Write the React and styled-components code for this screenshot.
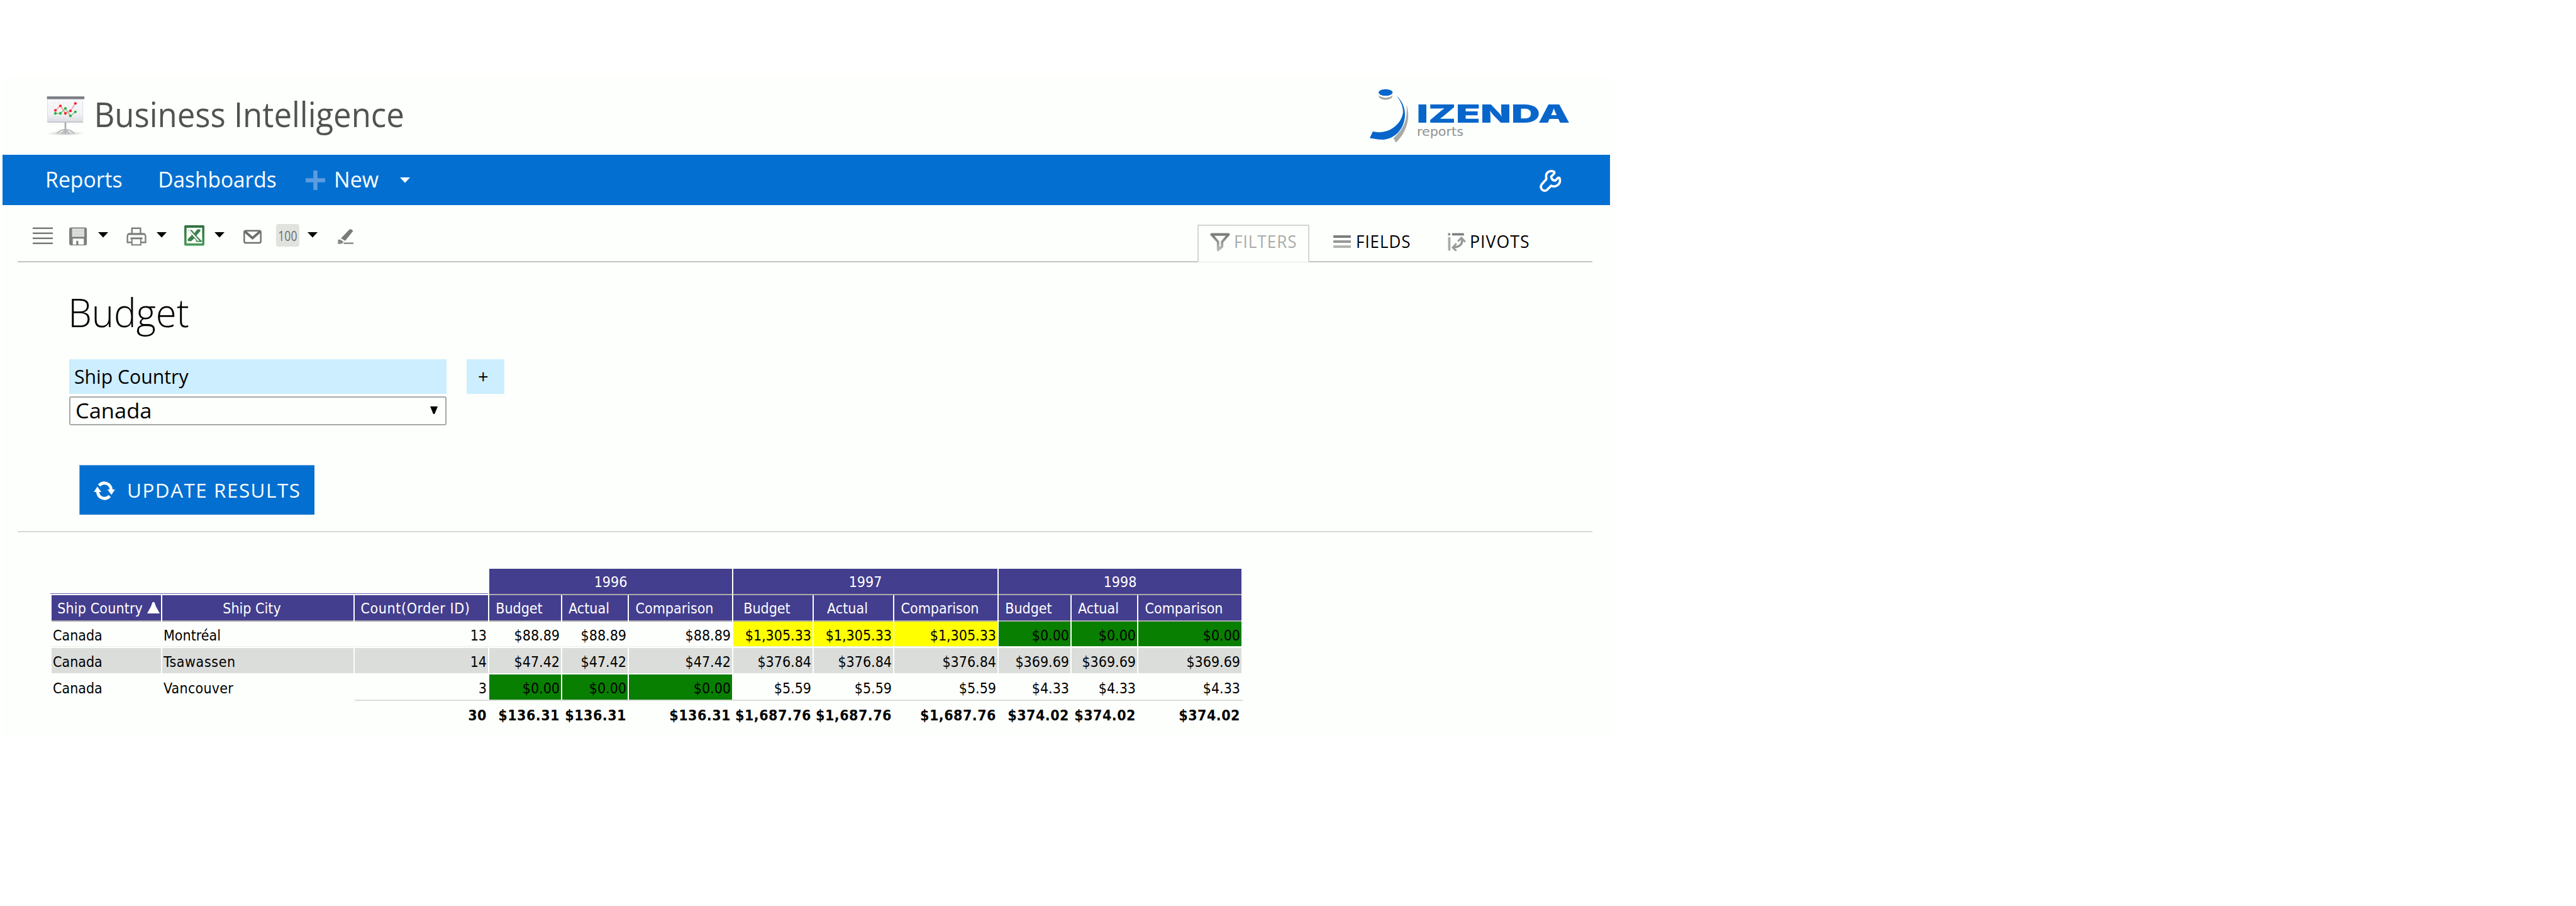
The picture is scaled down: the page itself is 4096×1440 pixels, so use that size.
import React, { useLayoutEffect, useState } from "react";
import styled, { createGlobalStyle, css } from "styled-components";

const SANS = '"Open Sans", "Noto Sans", sans-serif';
const BG = "#fdfffc";
const BLUE = "#0370d1";
const PURPLE = "#443e8e";

const GlobalStyle = createGlobalStyle`
  * { box-sizing: border-box; }
  body { margin: 0; background: #fff; font-family: ${SANS}; color: #000; }
`;

/* ---------- text that keeps a set ink width ---------- */

const FitBox = styled.span`
  display: block;
  flex: none;
  width: ${(p) => p.$w}px;
  white-space: pre;
  font-family: ${(p) => p.$family};
  font-size: ${(p) => p.$size}px;
  font-weight: ${(p) => p.$weight};
  line-height: ${(p) => p.$size * 1.4}px;
  color: ${(p) => p.$color};
  margin-left: ${(p) => p.$ml}px;
  margin-top: ${(p) => p.$mt}px;
`;

const FitInner = styled.span`
  display: inline-block;
  transform-origin: 0 50%;
  letter-spacing: ${(p) => p.$ls}px;
`;

function Fit({ w, size, weight = 400, color = "#000", ls = 0, ml = 0, mt = 0, family = SANS, children }) {
  const [transform, setTransform] = useState("none");
  useLayoutEffect(() => {
    const ctx = document.createElement("canvas").getContext("2d");
    ctx.font = `${weight} ${size}px ${family}`;
    const m = ctx.measureText(children);
    const ink = m.actualBoundingBoxLeft + m.actualBoundingBoxRight + ls * (children.length - 1);
    const k = w / ink;
    setTransform(`translateX(${m.actualBoundingBoxLeft * k}px) scaleX(${k})`);
  }, [w, size, weight, ls, family, children]);
  return (
    <FitBox $w={w} $size={size} $weight={weight} $color={color} $ml={ml} $mt={mt} $family={family}>
      <FitInner $ls={ls} style={{ transform }}>{children}</FitInner>
    </FitBox>
  );
}

/* ---------- shell ---------- */

const Page = styled.div`
  width: 4096px;
  height: 1440px;
  padding: 122px 0 0 4px;
  overflow: hidden;
`;

const Panel = styled.main`
  width: 2556px;
  height: 1050px;
  background: ${BG};
  display: flex;
  flex-direction: column;
`;

const Header = styled.header`
  height: 124px;
  flex: none;
  display: flex;
  align-items: flex-start;
  padding: 0 65px 0 69px;
`;

const Svg = styled.svg`
  display: block;
  flex: none;
  width: ${(p) => p.$w}px;
  height: ${(p) => p.$h}px;
  margin-left: ${(p) => p.$ml || 0}px;
  margin-top: ${(p) => p.$mt || 0}px;
`;

const Logo = styled.div`
  display: flex;
  margin-left: auto;
`;

const LogoWords = styled.div`
  display: flex;
  flex-direction: column;
  padding-top: 31px;
`;

const Nav = styled.nav`
  height: 80px;
  flex: none;
  display: flex;
  align-items: center;
  background: ${BLUE};
  padding: 0 76px 0 71px;
`;

const Toolbar = styled.div`
  height: 91px;
  flex: none;
  display: flex;
  align-items: flex-start;
  margin: 0 28px 0 24px;
  border-bottom: 2px solid #c1c4c1;
`;

const Tools = styled.div`
  display: flex;
  padding: 26px 0 0 24px;
`;

const Tabs = styled.div`
  display: flex;
  margin-left: auto;
  padding-top: 31px;
`;

const Tab = styled.div`
  height: 60px;
  width: ${(p) => p.$w}px;
  display: flex;
  align-items: center;
  padding: 0 0 5px ${(p) => p.$pl}px;
  border: 2px solid transparent;
  ${(p) =>
    p.$active &&
    css`
      background: ${BG};
      border-color: #d3d6d3;
      border-bottom: 1px solid #e2e4e2;
    `}
`;

/* ---------- filter area ---------- */

const Filters = styled.section`
  margin: 0 28px 0 24px;
  padding: 37px 0 25px 82px;
  height: 429px;
  flex: none;
  border-bottom: 2px solid #d6d8d6;
`;

const Row = styled.div`
  display: flex;
  gap: 32px;
`;

const Heading = styled.h1`
  margin: 0 0 33px 4px;
  height: 84px;
  display: flex;
  align-items: center;
`;

const FieldLabel = styled.div`
  width: ${(p) => p.$w}px;
  height: 55px;
  display: flex;
  align-items: center;
  padding-left: ${(p) => p.$pl}px;
  background: #cceeff;
`;

const Select = styled.div`
  width: 600px;
  height: 46px;
  margin-top: 4px;
  display: flex;
  align-items: center;
  justify-content: space-between;
  padding: 0 12px 0 10px;
  border: 2px solid #a7a9a7;
  border-radius: 3px;
`;

const Button = styled.div`
  width: 374px;
  height: 79px;
  margin: 63px 0 0 16px;
  display: flex;
  align-items: center;
  padding-left: 23px;
  background: ${BLUE};
  box-shadow: inset 1px 1px 0 #62a6e2;
`;

/* ---------- table ---------- */

const Table = styled.div`
  display: grid;
  grid-template-columns: 178px 306px 214px 116px 106px 166px 128px 128px 166px 116px 106px 166px;
  grid-auto-rows: 42px;
  margin: 58px 0 0 76px;
  width: max-content;
  font-family: "DejaVu Sans Condensed", "DejaVu Sans", sans-serif;
  font-stretch: condensed;
  font-size: 23px;
`;

const Blank = styled.div`
  grid-column: span 3;
  height: 40px;
  margin-right: 2px;
  border-bottom: 1px solid #6a65a6;
`;

const HeadCell = styled.div`
  grid-column: span ${(p) => p.$span || 1};
  display: flex;
  align-items: center;
  justify-content: ${(p) => (p.$first ? "flex-end" : "center")};
  gap: 7px;
  margin-right: 2px;
  margin-left: ${(p) => (p.$first ? 2 : 0)}px;
  padding: 1px ${(p) => (p.$span ? 0 : p.$first ? 2 : 19)}px 0 0;
  background: ${PURPLE};
  border-bottom: 2px solid #ababab;
  color: #fff;
  letter-spacing: ${(p) => p.$ls ?? 0}px;
  white-space: nowrap;
`;

const Cell = styled.div`
  margin: 0 2px 0 ${(p) => (p.$first ? 2 : 0)}px;
  height: 40px;
  padding: 1px 2px 0 2px;
  line-height: 42px;
  letter-spacing: ${(p) => p.$ls ?? 0}px;
  text-align: ${(p) => (p.$left ? "left" : "right")};
  background: ${(p) => p.$bg || "transparent"};
  ${(p) => p.$line && css`border-bottom: 1px solid #eceeec;`}
`;

const TotalCell = styled.div`
  margin-top: -2px;
  height: 44px;
  padding: 2px 4px 0 0;
  line-height: 42px;
  font-weight: 700;
  letter-spacing: 0.5px;
  white-space: nowrap;
  display: flex;
  justify-content: flex-end;
  border-top: 2px solid ${(p) => (p.$plain ? "transparent" : "#dadcda")};
`;

/* ---------- icons ---------- */

const Caret = ({ ml, mt = 17, color = "#000" }) => (
  <Svg $w={16} $h={9} $ml={ml} $mt={mt} viewBox="0 0 16 9"><path d="M0 0H16L8 8.6Z" fill={color} /></Svg>
);

const BoardIcon = () => (
  <Svg $w={62} $h={64} $mt={31} viewBox="0 0 78 80">
    <defs>
      <linearGradient id="board" x1="0" y1="0" x2="0" y2="1">
        <stop offset="0" stopColor="#f9f9fa" /><stop offset=".65" stopColor="#f1f2f5" /><stop offset="1" stopColor="#d6d9df" />
      </linearGradient>
      <radialGradient id="shade"><stop offset="0" stopColor="#bbb" /><stop offset="1" stopColor="#bbb" stopOpacity="0" /></radialGradient>
    </defs>
    <ellipse cx="39" cy="74" rx="38" ry="4.5" fill="url(#shade)" />
    <rect x="3" y="6" width="71" height="46" fill="url(#board)" stroke="#d5d7dc" />
    <path d="M9 13H68M9 21H68M9 29H68M9 37H68M16 9V43M26 9V43M36 9V43M46 9V43M56 9V43" stroke="#e2e4e9" strokeWidth="1" strokeDasharray="2 2" />
    <rect x="2" y="0" width="75" height="5.5" rx="1" fill="#777c82" />
    <path d="M3 51.500H74" stroke="#c3c6cc" strokeWidth="2" />
    <path d="M39 52V74" stroke="#aaadb2" strokeWidth="3.500" />
    <path d="M22 74Q28 67 39 66.500Q50 67 57 74M31 74L39 67L47 74" fill="none" stroke="#b5b8bc" strokeWidth="2.400" />
    <path d="M19 34H29L39 24L49 39L59 31" fill="none" stroke="#7cc587" strokeWidth="1.700" />
    <path d="M19 28L29 19L39 34L49 29L59 14" fill="none" stroke="#f58a8a" strokeWidth="1.700" />
    <g fill="#2fae48"><circle cx="19" cy="34" r="2.700" /><circle cx="29" cy="34" r="2.700" /><circle cx="39" cy="24" r="2.700" /><circle cx="49" cy="39" r="2.700" /><circle cx="59" cy="31" r="2.700" /></g>
    <g fill="#f5262e"><circle cx="19" cy="28" r="2.700" /><circle cx="29" cy="19" r="2.700" /><circle cx="39" cy="34" r="2.700" /><circle cx="49" cy="29" r="2.700" /><circle cx="59" cy="14" r="2.700" /></g>
  </Svg>
);

const LogoMark = () => (
  <Svg $w={64} $h={88} $mt={19} viewBox="0 0 80 110">
    <ellipse cx="31.500" cy="14.500" rx="13.500" ry="7.500" fill="#9c9e9c" />
    <ellipse cx="31.500" cy="10.500" rx="14" ry="7.500" fill={BG} />
    <ellipse cx="31.500" cy="7.500" rx="14" ry="6.500" fill="#0866cb" />
    <path d="M53 14C63 22 70 36 70 51C70 80 48 103 22 101C18 101 13 100 0 98L6 85C36 92 62 72 66 48C67 36 61 23 53 14Z" fill="#0866cb" />
    <path d="M73 31C75 38 76.500 46 76.500 52C76.500 76 65 95 52 107L47 98C61 86 70 72 72.500 56C74 46 73.500 38 73 31Z" fill="#a8aaa8" />
  </Svg>
);

const WrenchIcon = () => (
  <Svg $w={36} $h={38} $mt={3} viewBox="0 0 45 47">
    <path d="M28.500 4.500C20 1 12.500 6.500 13 14C13.300 17 14 18 13 20L4.500 29.500C-.5 36 6 46 14.500 41L23 32.500C32 37 41.500 30 40.500 20.500C40 17 38.500 15.500 36.500 17L31 22.500C27 22 23.500 19.500 23 14.500L28 9.500C30 7.500 30 5.500 28.500 4.500Z" fill="none" stroke="#fff" strokeWidth="4.600" strokeLinejoin="round" />
  </Svg>
);

const MenuIcon = () => (
  <Svg $w={32} $h={44} viewBox="0 0 40 55"><path d="M0 13.500H40M0 23.500H40M0 33.500H40M0 43.500H40" stroke="#777a77" strokeWidth="3" /></Svg>
);

const SaveIcon = () => (
  <Svg $w={29} $h={44} $ml={26} viewBox="0 0 36 55">
    <rect x="0" y="12" width="35" height="35.500" rx="4" fill="#7c7e7c" />
    <rect x="5.500" y="14" width="24.500" height="16.500" fill="#dcdddc" />
    <path d="M6 19.500H30M6 25H30" stroke="#cccecc" strokeWidth="1" />
    <path d="M7 34H29V46H18V38.500H14V46H7Z" fill={BG} />
  </Svg>
);

const PrintIcon = () => (
  <Svg $w={32} $h={44} $ml={29} viewBox="0 0 40 55">
    <g fill={BG} stroke="#7c7e7c" strokeWidth="3">
      <path d="M11 24V13.500H28V24" />
      <path d="M2 41.500V30Q2 24.500 6 24.500H34Q38 24.500 38 30V41.500Z" />
      <path d="M11 33.500H28.500V46.500H11Z" strokeWidth="2.500" />
    </g>
    <path d="M4 25H36M8 33.500H32" stroke="#7c7e7c" strokeWidth="3.500" />
  </Svg>
);

const ExcelIcon = () => (
  <Svg $w={32} $h={44} $ml={28} viewBox="0 0 40 55">
    <defs><linearGradient id="xl" x1="0" y1="0" x2="0" y2="1"><stop offset="0" stopColor="#33713f" /><stop offset="1" stopColor="#489a5c" /></linearGradient></defs>
    <rect x="0" y="7.500" width="40" height="40.500" rx="2.500" fill="url(#xl)" />
    <rect x="4.500" y="12.500" width="31" height="31" fill={BG} />
    <path d="M7 17H15L20 23L26 15.500H32L32 19L24 28L35 39H25L20 33.500L14 39H7V35L15 27Z" fill="#3b804b" />
    <path d="M9 17L29 39" stroke={BG} strokeWidth="3" />
    <path d="M23 39.500H35" stroke="#3b804b" strokeWidth="2" />
  </Svg>
);

const MailIcon = () => (
  <Svg $w={29} $h={44} $ml={30} viewBox="0 0 36 55">
    <rect x="1.500" y="18.500" width="33" height="24" rx="3" fill={BG} stroke="#6d6f6d" strokeWidth="3" />
    <path d="M3 20L18 33L33 20" fill="none" stroke="#6d6f6d" strokeWidth="5" />
  </Svg>
);

const PencilIcon = () => (
  <Svg $w={26} $h={44} $ml={32} viewBox="0 0 33 55">
    <path d="M23 16.500Q27 13 31 19L15 38.500L6.500 33.500Z" fill="#7a7c7a" />
    <path d="M5 36L12 40.500L8 44.500L0.500 45L0.500 36.500Z" fill="#868886" />
    <path d="M12 43.500H32" stroke="#7a7c7a" strokeWidth="2.700" />
  </Svg>
);

const HundredBox = styled.div`
  width: 37px;
  height: 36px;
  margin: 4px 0 0 23px;
  display: flex;
  align-items: center;
  padding-left: 4px;
  border-radius: 4px;
  background: #e1e3df;
`;

const FunnelIcon = () => (
  <Svg $w={32} $h={30} viewBox="0 0 40 37">
    <defs><linearGradient id="fn" x1="0" y1="0" x2="0" y2="1"><stop offset="0" stopColor="#747674" /><stop offset="1" stopColor="#b9bbb9" /></linearGradient></defs>
    <path d="M3 3H37L24 18V27L16 34V18Z" fill={BG} stroke="url(#fn)" strokeWidth="4.800" strokeLinejoin="round" />
    <path d="M2 3H38" stroke="#7c7e7c" strokeWidth="4.800" />
  </Svg>
);

const FieldsIcon = () => (
  <Svg $w={28} $h={21} viewBox="0 0 35 26">
    <rect width="35" height="5" y="0" rx="1" fill="#7c7e7c" /><rect width="35" height="5" y="10" rx="1" fill="#969896" /><rect width="35" height="5" y="20" rx="1" fill="#b2b4b2" />
  </Svg>
);

const PivotIcon = () => (
  <Svg $w={29} $h={29} viewBox="0 0 36 36">
    <path d="M8.500 3H32" stroke="#7c7e7c" strokeWidth="4.600" />
    <path d="M.5 3H5" stroke="#8c8e8c" strokeWidth="4.600" />
    <path d="M3 8.500V35" stroke="#a8aaa8" strokeWidth="4.600" />
    <path d="M28 11Q31 27 12 29" fill="none" stroke="#929492" strokeWidth="4.400" />
    <path d="M20 17L27 10L34.500 18M17 21L10 29L17 36" fill="none" stroke="#9a9c9a" strokeWidth="3.800" />
  </Svg>
);

const RefreshIcon = () => (
  <Svg $w={34} $h={32} $mt={2} viewBox="0 0 42 40">
    <g fill="none" stroke="#fff" strokeWidth="6">
      <path d="M10.500 9.500C18 1 33 4 34.500 18" />
      <path d="M31.500 30.500C24 39 9 36 7.500 22" />
    </g>
    <path d="M27 17.500H42L35 28Z" fill="#fff" />
    <path d="M0 22.500H15L7 12Z" fill="#fff" />
  </Svg>
);

/* ---------- data ---------- */

const YEARS = ["1996", "1997", "1998"];
const MEASURES = ["Budget", "Actual", "Comparison"];
const YELLOW = "#ffff00";
const GREEN = "#087f00";
const GREY = "#dbdddb";

const ROWS = [
  { city: "Montréal", count: 13, values: ["$88.89", "$1,305.33", "$0.00"], fills: [null, YELLOW, GREEN], line: true },
  { city: "Tsawassen", track: 0.6, count: 14, values: ["$47.42", "$376.84", "$369.69"], fills: [GREY, GREY, GREY], base: GREY },
  { city: "Vancouver", track: 0.25, count: 3, values: ["$0.00", "$5.59", "$4.33"], fills: [GREEN, null, null] },
];
const TOTALS = ["$136.31", "$1,687.76", "$374.02"];

function Results() {
  return (
    <Table>
      <Blank />
      {YEARS.map((y) => <HeadCell key={y} $span={3}>{y}</HeadCell>)}
      <HeadCell $first $ls={0.15}>
        Ship Country
        <Svg $w={20} $h={18} $mt={-2} viewBox="0 0 20 18"><path d="M8.500 0H11.500L14 7L20 18H0L6 7Z" fill="#fff" /></Svg>
      </HeadCell>
      <HeadCell>Ship City</HeadCell>
      <HeadCell $ls={0.6}>Count(Order ID)</HeadCell>
      {YEARS.map((y) => MEASURES.map((m) => <HeadCell key={y + m}>{m}</HeadCell>))}
      {ROWS.map((r) => (
        <React.Fragment key={r.city}>
          <Cell $left $first $bg={r.base} $line={r.line}>Canada</Cell>
          <Cell $left $bg={r.base} $line={r.line} $ls={r.track}>{r.city}</Cell>
          <Cell $bg={r.base} $line={r.line}>{r.count}</Cell>
          {r.values.map((v, i) => MEASURES.map((m) => (
            <Cell key={YEARS[i] + m} $bg={r.fills[i]} $line={r.line}>{v}</Cell>
          )))}
        </React.Fragment>
      ))}
      <TotalCell $plain />
      <TotalCell $plain />
      <TotalCell>30</TotalCell>
      {TOTALS.map((t, i) => MEASURES.map((m) => <TotalCell key={YEARS[i] + m}>{t}</TotalCell>))}
    </Table>
  );
}

export default function App() {
  return (
    <Page>
      <GlobalStyle />
      <Panel>
        <Header>
          <BoardIcon />
          <Fit w={487} size={55} color="#50534f" ml={19} mt={20}>Business Intelligence</Fit>
          <Logo>
            <LogoMark />
            <LogoWords>
              <Fit w={241} size={40} weight={900} family="Inter, sans-serif" color="#0866cb" ml={12}>IZENDA</Fit>
              <Fit w={72} size={19} family='"DejaVu Sans", sans-serif' color="#8f918f" ml={12} mt={-13}>reports</Fit>
            </LogoWords>
          </Logo>
        </Header>
        <Nav>
          <Fit w={119} size={35} color="#fff" mt={-4}>Reports</Fit>
          <Fit w={185} size={35} color="#fff" ml={60} mt={-4}>Dashboards</Fit>
          <Svg $w={31} $h={31} $ml={47} viewBox="0 0 31 31"><path d="M15.500 0V31M0 15.500H31" stroke="#5c9cdf" strokeWidth="6.500" /></Svg>
          <Fit w={68} size={35} color="#fff" ml={17} mt={-4}>New</Fit>
          <Caret ml={34} mt={0} color="#fff" />
          <Logo><WrenchIcon /></Logo>
        </Nav>
        <Toolbar>
          <Tools>
            <MenuIcon />
            <SaveIcon />
            <Caret ml={17} />
            <PrintIcon />
            <Caret ml={16} />
            <ExcelIcon />
            <Caret ml={16} />
            <MailIcon />
            <HundredBox>
              <Fit w={29} size={22} color="#6c6e6c">100</Fit>
            </HundredBox>
            <Caret ml={13} />
            <PencilIcon />
          </Tools>
          <Tabs>
            <Tab $w={178} $pl={18} $active>
              <FunnelIcon />
              <Fit w={97} size={26.5} color="#a9aba9" ls={1} ml={8}>FILTERS</Fit>
            </Tab>
            <Tab $w={181} $pl={36}>
              <FieldsIcon />
              <Fit w={84} size={26.5} ls={1} ml={10}>FIELDS</Fit>
            </Tab>
            <Tab $w={269} $pl={37}>
              <PivotIcon />
              <Fit w={92} size={26.5} ls={1} ml={8}>PIVOTS</Fit>
            </Tab>
          </Tabs>
        </Toolbar>
        <Filters>
          <Heading><Fit w={186} size={62} weight={300}>Budget</Fit></Heading>
          <Row>
            <FieldLabel $w={600} $pl={9}><Fit w={181} size={31}>Ship Country</Fit></FieldLabel>
            <FieldLabel $w={60} $pl={19}><Fit w={15} size={29}>+</Fit></FieldLabel>
          </Row>
          <Select>
            <Fit w={117} size={33}>Canada</Fit>
            <Svg $w={12} $h={12} $mt={-3} viewBox="0 0 12 12"><path d="M0 0H12L7 12H5Z" /></Svg>
          </Select>
          <Button>
            <RefreshIcon />
            <Fit w={272} size={31} color="#fff" ls={1.5} ml={21} mt={3}>UPDATE RESULTS</Fit>
          </Button>
        </Filters>
        <Results />
      </Panel>
    </Page>
  );
}
